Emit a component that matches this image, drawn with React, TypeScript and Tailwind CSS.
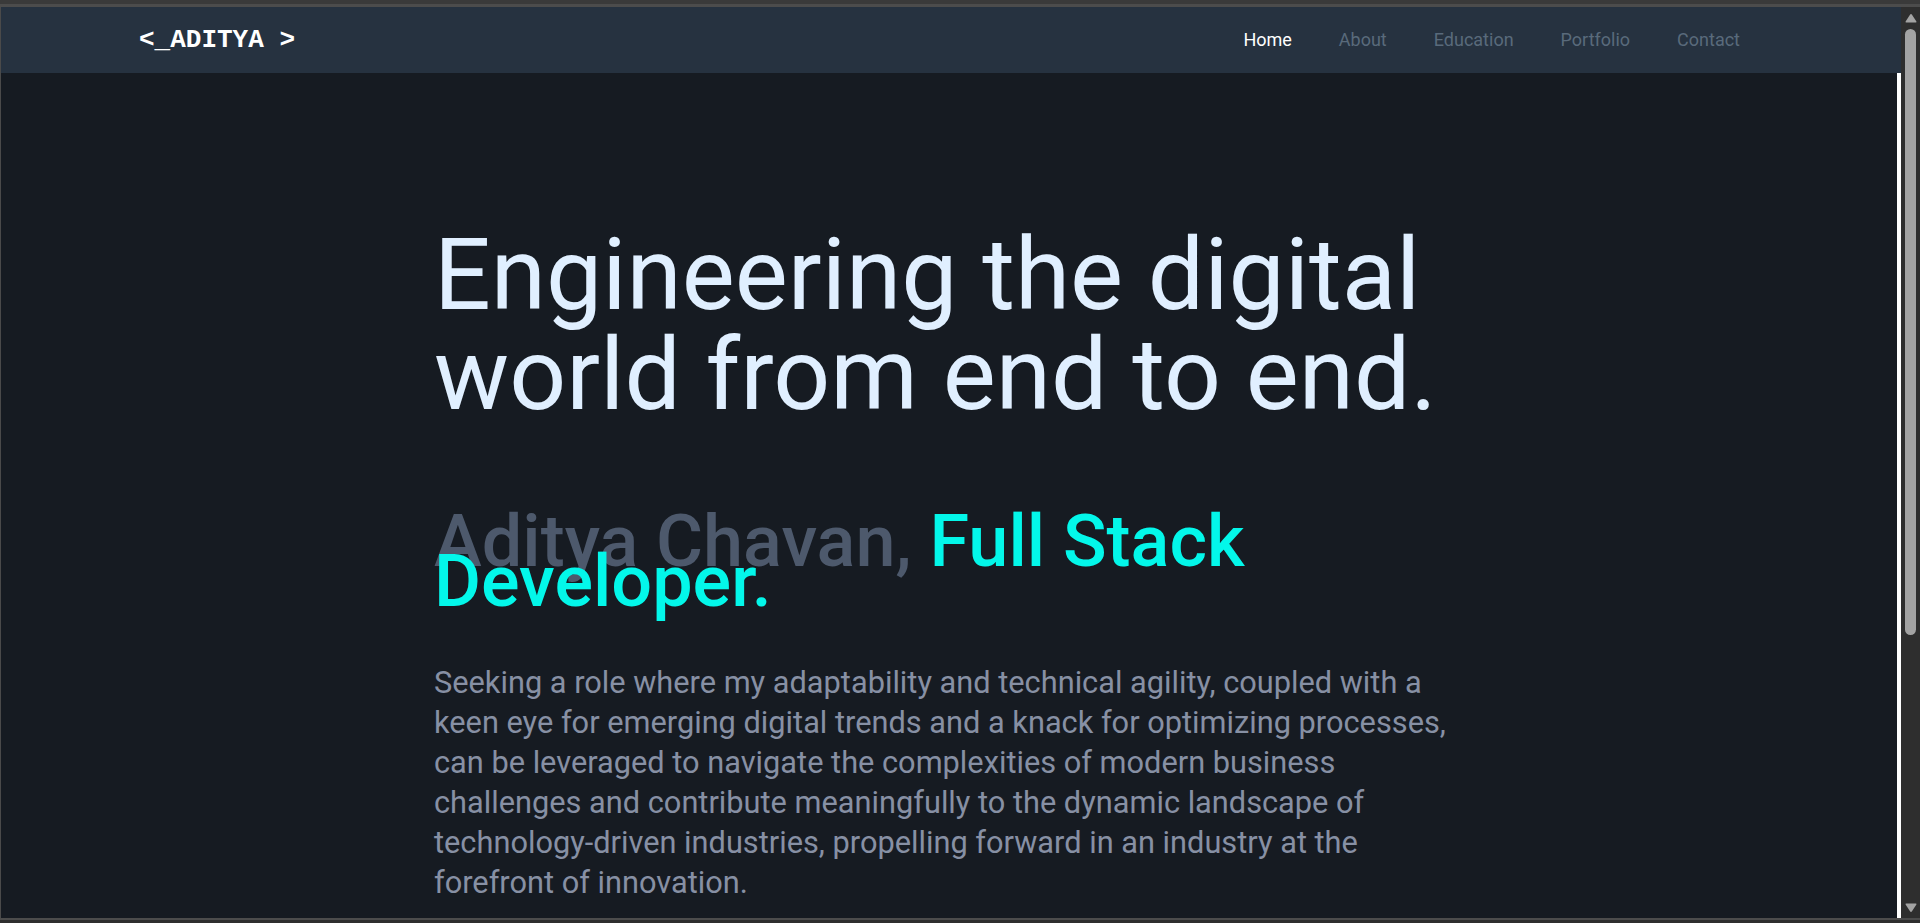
import React from "react";

const links = ["Home", "About", "Education", "Portfolio", "Contact"];

function UpArrow() {
  return (
    <svg width="12" height="10" viewBox="0 0 12 10">
      <path d="M6 1 Q6.6 1 7 1.7 L11.4 8.6 Q11.8 9.5 10.8 9.5 L1.2 9.5 Q0.2 9.5 0.6 8.6 L5 1.7 Q5.4 1 6 1 Z" fill="#a3a3a3" />
    </svg>
  );
}

function DownArrow() {
  return (
    <svg width="12" height="10" viewBox="0 0 12 10">
      <path d="M6 9 Q6.6 9 7 8.3 L11.4 1.4 Q11.8 0.5 10.8 0.5 L1.2 0.5 Q0.2 0.5 0.6 1.4 L5 8.3 Q5.4 9 6 9 Z" fill="#a3a3a3" />
    </svg>
  );
}

export default function App() {
  return (
    <div
      className="w-[1920px] h-[923px] flex flex-col overflow-hidden bg-[#161b22]"
      style={{ fontFamily: "Roboto, 'Noto Sans', sans-serif" }}
    >
      {/* top window border */}
      <div className="h-[4px] bg-[#3a3a3a] shrink-0" />
      <div className="h-[3px] bg-[#4c4c4c] shrink-0" />

      <div className="flex flex-1 min-h-0">
        <div className="w-px bg-[#4a4a4a]" />

        <div className="flex-1 flex flex-col min-w-0">
          {/* nav */}
          <nav className="h-[66px] shrink-0 bg-[#263240] flex items-center justify-between pl-[138px] pr-[161px]">
            <div
              className="text-[26px] font-bold text-white whitespace-pre"
              style={{ fontFamily: "'Liberation Mono', 'Courier New', monospace" }}
            >
              {"<_ADITYA >"}
            </div>
            <ul className="flex items-center gap-[47px] text-[18px] pb-[2px]">
              {links.map((l, i) => (
                <li key={l} className={i === 0 ? "text-white" : "text-[#596a7b]"}>
                  {l}
                </li>
              ))}
            </ul>
          </nav>

          <div className="flex flex-1 min-h-0">
            <main className="flex-1 pt-[152px]">
              <div className="w-[1030px] mx-auto">
                <h1 className="text-[100px] leading-none font-normal text-[#e0efff]">
                  Engineering the digital world from end to end.
                </h1>
                <h2 className="mt-[97px] text-[72px] leading-[40px] font-medium text-[#4d596c]">
                  Aditya Chavan, <span className="text-[#03f7ea]">Full Stack Developer.</span>
                </h2>
                <p className="mt-[61px] text-[30.75px] leading-[40px] text-[#8790a4]">
                  Seeking a role where my adaptability and technical agility, coupled with a keen eye for
                  emerging digital trends and a knack for optimizing processes, can be leveraged to
                  navigate the complexities of modern business challenges and contribute meaningfully to
                  the dynamic landscape of technology-driven industries, propelling forward in an
                  industry at the forefront of innovation.
                </p>
              </div>
            </main>
            <div className="w-[4px] bg-white" />
          </div>
        </div>

        {/* scrollbar */}
        <div className="w-[19px] bg-[#2e2e2e] flex flex-col items-center pb-[5px]">
          <div className="mt-[6px] flex justify-center">
            <UpArrow />
          </div>
          <div className="mt-[6px] w-[11px] h-[606px] rounded-full bg-[#a3a3a3]" />
          <div className="flex-1" />
          <DownArrow />
        </div>
      </div>

      {/* bottom border */}
      <div className="h-[2px] bg-[#4c4c4c] shrink-0" />
      <div className="h-[3px] bg-[#2f2f2f] shrink-0" />
    </div>
  );
}
